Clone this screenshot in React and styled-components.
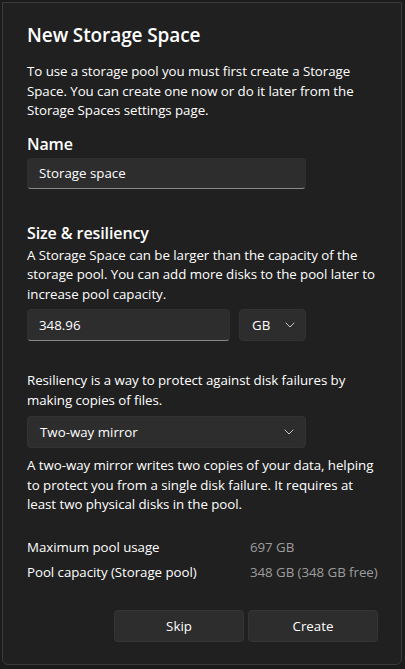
import React from "react";
import styled, { createGlobalStyle } from "styled-components";

const GlobalStyle = createGlobalStyle`
  html, body {
    margin: 0;
    padding: 0;
    background: #1b1b1b;
  }
  body {
    font-family: "Segoe UI", "Open Sans", "Noto Sans", sans-serif;
    color: #ffffff;
  }
`;

const Screen = styled.div`
  width: 405px;
  height: 669px;
  padding: 2px 3px 4px 2px;
  box-sizing: border-box;
  display: flex;
`;

const Dialog = styled.div`
  flex: 1;
  background: #202020;
  border: 1px solid #3a3a3a;
  border-radius: 0 0 6px 6px;
  padding: 18px 23px 22px 24px;
  display: flex;
  flex-direction: column;
`;

const Title = styled.h1`
  margin: 0 0 13px;
  font-size: 19px;
  font-weight: 600;
  line-height: 28px;
  letter-spacing: -0.1px;
`;

const Text = styled.p`
  margin: ${(p) => p.$mt || "0"} 0 ${(p) => p.$mb || "0"};
  font-size: 13.3px;
  line-height: 19.5px;
  color: #ffffff;
  letter-spacing: -0.05px;
`;

const Heading = styled.h2`
  margin: ${(p) => p.$mt || "0"} 0 ${(p) => p.$mb || "3px"};
  font-size: 16px;
  font-weight: 600;
  line-height: 22px;
  letter-spacing: -0.1px;
`;

const Row = styled.div`
  display: flex;
  gap: 9px;
  margin-bottom: ${(p) => p.$mb || "0"};
`;

const Input = styled.div`
  width: ${(p) => p.$w}px;
  height: ${(p) => p.$h || 31}px;
  box-sizing: border-box;
  background: #2d2d2d;
  border: 1px solid #303030;
  border-bottom: 1px solid #8a8a8a;
  border-radius: 4px;
  padding: 0 11px;
  display: flex;
  align-items: center;
  font-size: 13.3px;
  color: #ffffff;
`;

const Select = styled.div`
  width: ${(p) => p.$w}px;
  height: 32px;
  box-sizing: border-box;
  background: #2d2d2d;
  border: 1px solid #333333;
  border-radius: 4px;
  padding: 0 ${(p) => p.$pr || 12}px 0 ${(p) => p.$pl || 12}px;
  display: flex;
  align-items: center;
  justify-content: space-between;
  font-size: 13.3px;
  color: #ffffff;
`;

const Chevron = () => (
  <svg width="10" height="6" viewBox="0 0 10 6" fill="none">
    <path d="M1 1l4 4 4-4" stroke="#c8c8c8" strokeWidth="1" strokeLinecap="round" strokeLinejoin="round" />
  </svg>
);

const InfoGrid = styled.div`
  display: grid;
  grid-template-columns: 223px 1fr;
  row-gap: 5px;
  font-size: 13.3px;
  line-height: 20px;
  letter-spacing: -0.05px;
  margin-top: 22px;
`;

const Label = styled.span`
  color: #ffffff;
`;

const Value = styled.span`
  color: #9d9d9d;
`;

const Footer = styled.div`
  margin-top: auto;
  display: flex;
  justify-content: flex-end;
  gap: 4px;
`;

const Button = styled.button`
  width: 130px;
  height: 32px;
  background: #2d2d2d;
  border: 1px solid #353535;
  border-radius: 4px;
  color: #ffffff;
  font-family: inherit;
  font-size: 13.3px;
  padding: 0;
`;

export default function App() {
  return (
    <>
      <GlobalStyle />
      <Screen>
        <Dialog>
          <Title>New Storage Space</Title>
          <Text $mb="12px">
            To use a storage pool you must first create a Storage Space. You can create one now or do it later from the Storage Spaces settings page.
          </Text>
          <Heading>Name</Heading>
          <Row>
            <Input $w={279}>Storage space</Input>
          </Row>
          <Heading $mt="33px" $mb="2px">Size &amp; resiliency</Heading>
          <Text $mb="5px">
            A Storage Space can be larger than the capacity of the storage pool. You can add more disks to the pool later to increase pool capacity.
          </Text>
          <Row>
            <Input $w={203} $h={32}>348.96</Input>
            <Select $w={67} $pr={10}>
              <span>GB</span>
              <Chevron />
            </Select>
          </Row>
          <Text $mt="30px" $mb="6px">
            Resiliency is a way to protect against disk failures by making copies of files.
          </Text>
          <Row $mb="8px">
            <Select $w={279} $pr={11}>
              <span>Two-way mirror</span>
              <Chevron />
            </Select>
          </Row>
          <Text>
            A two-way mirror writes two copies of your data, helping to protect you from a single disk failure. It requires at least two physical disks in the pool.
          </Text>
          <InfoGrid>
            <Label>Maximum pool usage</Label>
            <Value>697 GB</Value>
            <Label>Pool capacity (Storage pool)</Label>
            <Value>348 GB (348 GB free)</Value>
          </InfoGrid>
          <Footer>
            <Button>Skip</Button>
            <Button>Create</Button>
          </Footer>
        </Dialog>
      </Screen>
    </>
  );
}
